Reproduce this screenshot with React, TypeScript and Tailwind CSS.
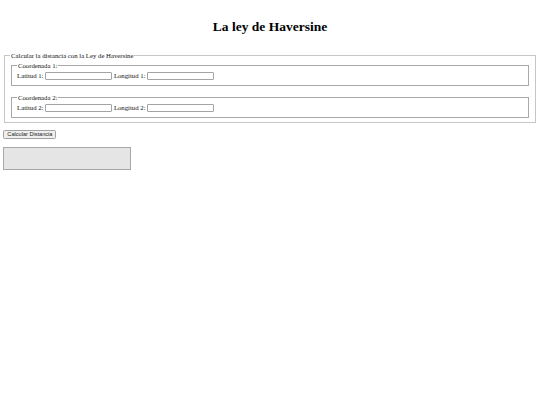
function Coord({ n, className = '' }: { n: number; className?: string }) {
  return (
    <fieldset className={`mx-[0.84px] border border-[#a9a9a9] px-[5px] pt-[2.4px] pb-[4.2px] ${className}`}>
      <legend className="px-[0.84px]">Coordenada {n}:</legend>
      <div className="flex items-center h-[8.6px]">
        <label className="mr-[1.7px]">Latitud {n}:</label>
        <input
          type="text"
          className="w-[67px] h-[8px] border border-[#a4a4a4] rounded-[1px] bg-white mr-[1.7px]"
        />
        <label className="mr-[1.7px]">Longitud {n}:</label>
        <input
          type="text"
          className="w-[67px] h-[8px] border border-[#a4a4a4] rounded-[1px] bg-white"
        />
      </div>
    </fieldset>
  );
}

export default function App() {
  return (
    <div className="w-[540px] h-[405px] bg-white text-[#111] px-[3.4px] pt-[3.4px] font-['Liberation_Serif',serif] text-[6.75px] leading-[1.15]">
      <h1 className="mt-[16px] mb-[16.6px] text-center text-[13.5px] font-bold leading-[1.15] text-black">
        La ley de Haversine
      </h1>
      <fieldset className="mx-[0.84px] border border-[#c6c6c6] px-[5px] pt-[2.4px] pb-[4.2px]">
        <legend className="px-[0.84px]">Calcular la distancia con la Ley de Haversine</legend>
        <Coord n={1} />
        <Coord n={2} className="mt-[8.2px]" />
      </fieldset>
      <div className="mt-[7.2px]">
        <button
          type="button"
          className="w-[53px] h-[9px] flex items-center justify-center bg-[#efefef] border border-[#a0a0a0] rounded-[1.5px] text-[5.6px] text-[#222] font-['Liberation_Sans',sans-serif] leading-none"
        >
          Calcular Distancia
        </button>
      </div>
      <div className="mt-[8.4px] w-[128px] h-[22.5px] bg-[#e5e5e5] border border-[#a8a8a8]" />
    </div>
  );
}
